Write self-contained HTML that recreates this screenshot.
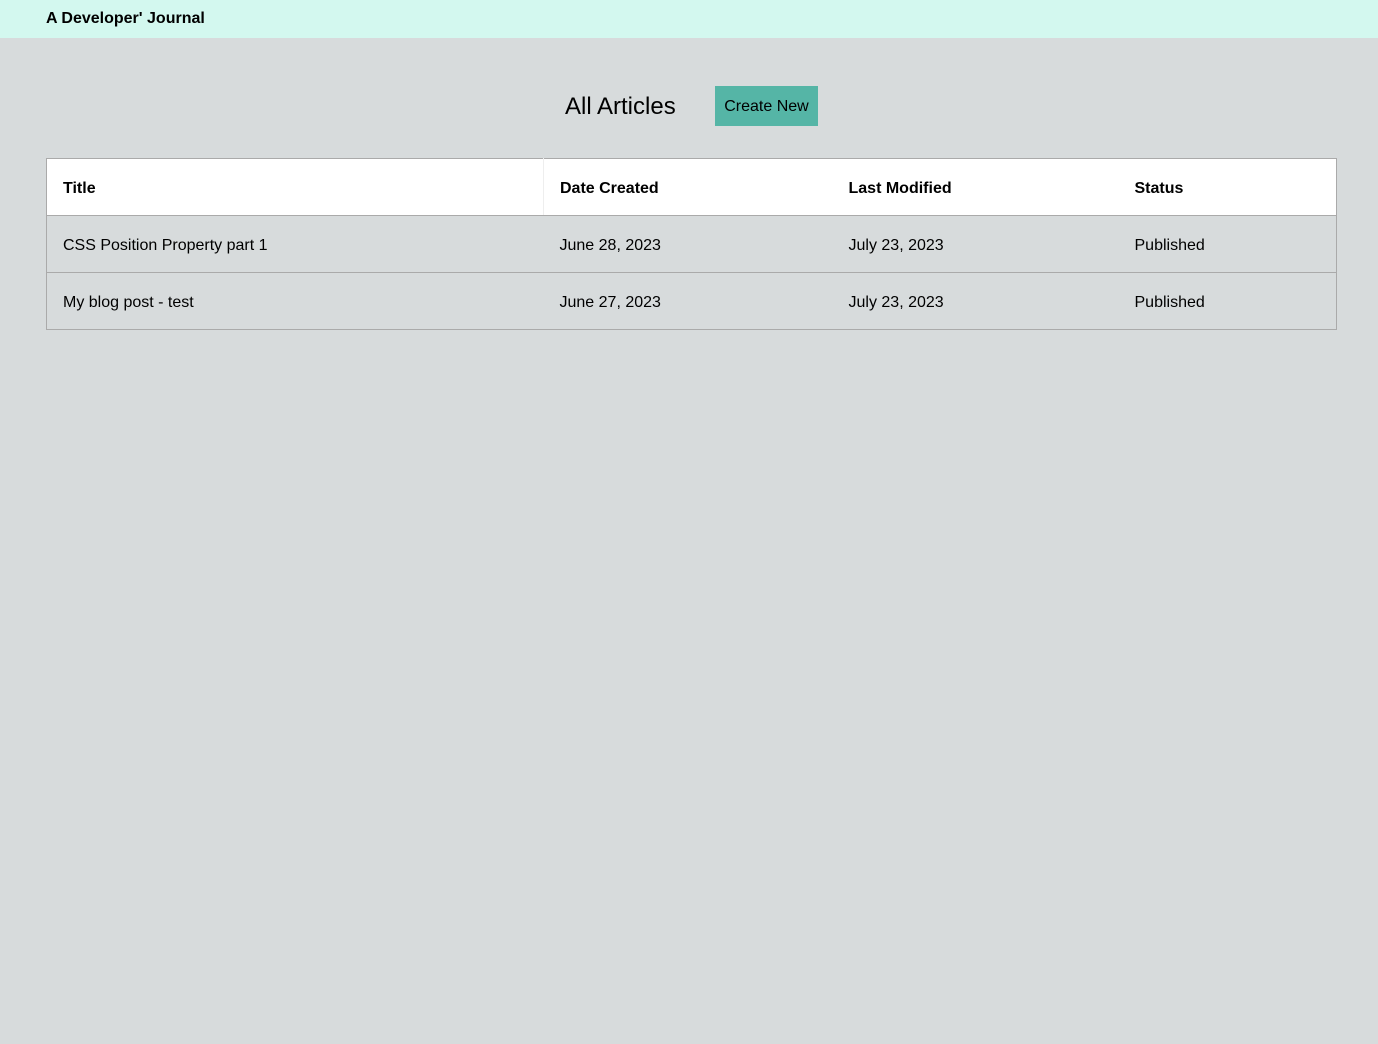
<!DOCTYPE html>
<html><head><style>
*{margin:0;padding:0;box-sizing:border-box}
body{width:1378px;height:1044px;background:#d7dbdc;font-family:"Liberation Sans",sans-serif;color:#000;overflow:hidden}
.nav{height:38px;background:#d3f8ef;padding-left:46px;font-size:16px;font-weight:bold;line-height:38px}
.head{position:absolute;top:86px;left:0;width:1378px;height:40px}
.h1{position:absolute;left:565px;top:5px;font-size:24px;line-height:32px}
.btn{position:absolute;left:715px;top:0;width:103px;height:40px;background:#55b5a6;font-size:16px;line-height:42px;text-align:center}
table{position:absolute;left:46px;top:158px;width:1291px;border-collapse:collapse;border:1px solid #aaa;font-size:16px}
td,th{height:57px;padding:3px 16px 0;text-align:left;border-bottom:1px solid #aaa}
th{background:#fff;font-weight:bold}
th:nth-child(2){border-left:1px solid #eee}
</style></head><body>
<div class="nav">A Developer' Journal</div>
<div class="head"><div class="h1">All Articles</div><div class="btn">Create New</div></div>
<table>
<colgroup><col style="width:497px"><col style="width:289px"><col style="width:286px"><col></colgroup>
<tr><th>Title</th><th>Date Created</th><th>Last Modified</th><th>Status</th></tr>
<tr><td>CSS Position Property part 1</td><td>June 28, 2023</td><td>July 23, 2023</td><td>Published</td></tr>
<tr><td>My blog post - test</td><td>June 27, 2023</td><td>July 23, 2023</td><td>Published</td></tr>
</table>
</body></html>
